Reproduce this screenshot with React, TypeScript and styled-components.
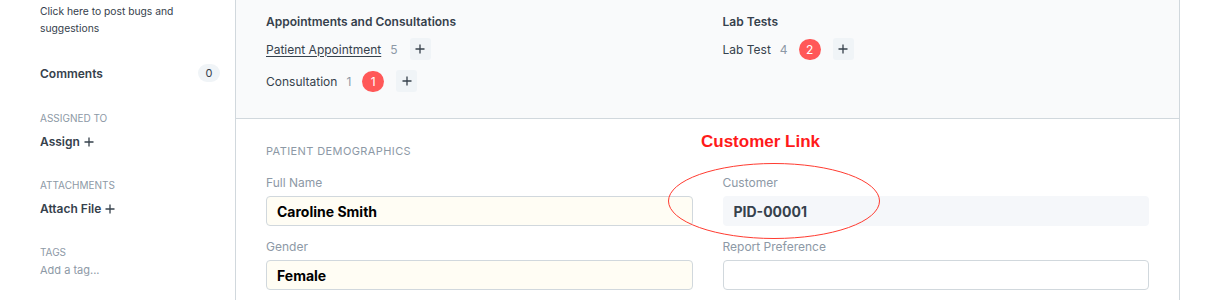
import styled, { createGlobalStyle } from "styled-components";

const GlobalStyle = createGlobalStyle`
  html, body {
    margin: 0;
    padding: 0;
    background: #fff;
    font-family: Inter, "Liberation Sans", sans-serif;
    color: #36414c;
  }
`;

const Page = styled.div`
  display: flex;
  width: 1221px;
  height: 300px;
  overflow: hidden;
`;

const Sidebar = styled.aside`
  width: 236px;
  flex: none;
  padding: 3px 15px 0 40px;
  box-sizing: border-box;
  border-right: 1px solid #d1d8dd;
`;

const HelpText = styled.p`
  margin: 0;
  font-size: 10.3px;
  line-height: 17px;
  color: #36414c;
`;

const CommentsRow = styled.div`
  display: flex;
  align-items: center;
  justify-content: space-between;
  margin-top: 27px;
  font-size: 12px;
  font-weight: 600;
`;

const CountPill = styled.span`
  display: inline-flex;
  align-items: center;
  justify-content: center;
  width: 22px;
  height: 18px;
  border-radius: 9px;
  background: #f0f4f7;
  font-size: 11px;
  font-weight: 400;
`;

const SideLabel = styled.div<{ $top: number }>`
  margin-top: ${(p) => p.$top}px;
  font-size: 10px;
  line-height: 14px;
  color: #8d99a6;
  text-transform: uppercase;
`;

const SideAction = styled.div`
  margin-top: 9px;
  font-size: 12px;
  font-weight: 600;
  line-height: 16px;
  display: flex;
  align-items: center;
  gap: 4px;
`;

const TagInput = styled.div`
  margin-top: 4px;
  font-size: 11px;
  color: #8d99a6;
`;

const Main = styled.main`
  width: 944px;
  flex: none;
  border-right: 1px solid #d1d8dd;
  box-sizing: border-box;
`;

const Dashboard = styled.section`
  background: #f9fafb;
  border-bottom: 1px solid #d1d8dd;
  height: 119px;
  box-sizing: border-box;
  padding: 14px 30px 0;
  display: grid;
  grid-template-columns: 1fr 1fr;
  column-gap: 30px;
`;

const GroupTitle = styled.div`
  font-size: 12px;
  font-weight: 600;
  line-height: 16px;
  margin-bottom: 8px;
`;

const LinkRow = styled.div`
  display: flex;
  align-items: center;
  height: 22px;
  margin-bottom: 10px;
  font-size: 12px;
`;

const DocLink = styled.span<{ $underline?: boolean }>`
  text-decoration: ${(p) => (p.$underline ? "underline" : "none")};
  text-underline-offset: 2px;
`;

const Count = styled.span`
  color: #8d99a6;
  margin-left: 9px;
`;

const RedBadge = styled.span`
  display: inline-flex;
  align-items: center;
  justify-content: center;
  min-width: 22px;
  height: 21px;
  padding: 0 1px;
  box-sizing: border-box;
  border-radius: 11px;
  background: #ff5858;
  color: #fff;
  font-size: 12px;
  margin-left: 11px;
`;

const AddButton = styled.span`
  display: inline-flex;
  align-items: center;
  justify-content: center;
  width: 21px;
  height: 22px;
  border-radius: 3px;
  background: #f0f4f7;
  margin-left: 12px;
`;

const FormSection = styled.section`
  position: relative;
  padding: 25px 30px 0;
`;

const SectionHead = styled.div`
  font-size: 11px;
  letter-spacing: 0.4px;
  color: #8d99a6;
  text-transform: uppercase;
  line-height: 14px;
  margin-bottom: 17px;
`;

const FieldGrid = styled.div`
  display: grid;
  grid-template-columns: 1fr 1fr;
  column-gap: 30px;
  row-gap: 13px;
`;

const Field = styled.div``;

const FieldLabel = styled.div`
  font-size: 12px;
  line-height: 16px;
  color: #8d99a6;
  margin-bottom: 5px;
`;

const Control = styled.div<{ $variant: "input" | "readonly" }>`
  height: 30px;
  box-sizing: border-box;
  border-radius: 4px;
  padding: 0 10px;
  display: flex;
  align-items: center;
  font-size: 14px;
  font-weight: 700;
  border: 1px solid ${(p) => (p.$variant === "readonly" ? "transparent" : "#d1d8dd")};
  background: ${(p) => (p.$variant === "readonly" ? "#f5f7fa" : "#fffdf4")};
  color: ${(p) => (p.$variant === "readonly" ? "#36414c" : "#000")};
`;

const EmptyControl = styled(Control)`
  background: #fff;
`;

const Annotation = styled.div`
  position: absolute;
  left: 465px;
  top: 13px;
  font-size: 17px;
  font-weight: 700;
  color: #ff1a1a;
  font-family: "Liberation Sans", sans-serif;
`;

const Ellipse = styled.svg`
  position: absolute;
  left: 432px;
  top: 44px;
  overflow: visible;
`;

const Plus = ({ size = 10 }: { size?: number }) => (
  <svg width={size} height={size} viewBox="0 0 10 10">
    <path d="M5 0.5v9M0.5 5h9" stroke="#36414c" strokeWidth="1.3" fill="none" />
  </svg>
);

export default function App() {
  return (
    <>
      <GlobalStyle />
      <Page>
        <Sidebar>
          <HelpText>
            Click here to post bugs and
            <br />
            suggestions
          </HelpText>
          <CommentsRow>
            <span>Comments</span>
            <CountPill>0</CountPill>
          </CommentsRow>
          <SideLabel $top={29}>Assigned To</SideLabel>
          <SideAction>
            Assign <Plus size={10} />
          </SideAction>
          <SideLabel $top={28}>Attachments</SideLabel>
          <SideAction>
            Attach File <Plus size={10} />
          </SideAction>
          <SideLabel $top={28}>Tags</SideLabel>
          <TagInput>Add a tag...</TagInput>
        </Sidebar>
        <Main>
          <Dashboard>
            <div>
              <GroupTitle>Appointments and Consultations</GroupTitle>
              <LinkRow>
                <DocLink $underline>Patient Appointment</DocLink>
                <Count>5</Count>
                <AddButton>
                  <Plus />
                </AddButton>
              </LinkRow>
              <LinkRow>
                <DocLink>Consultation</DocLink>
                <Count>1</Count>
                <RedBadge>1</RedBadge>
                <AddButton>
                  <Plus />
                </AddButton>
              </LinkRow>
            </div>
            <div>
              <GroupTitle>Lab Tests</GroupTitle>
              <LinkRow>
                <DocLink>Lab Test</DocLink>
                <Count>4</Count>
                <RedBadge>2</RedBadge>
                <AddButton>
                  <Plus />
                </AddButton>
              </LinkRow>
            </div>
          </Dashboard>
          <FormSection>
            <SectionHead>Patient Demographics</SectionHead>
            <FieldGrid>
              <Field>
                <FieldLabel>Full Name</FieldLabel>
                <Control $variant="input">Caroline Smith</Control>
              </Field>
              <Field>
                <FieldLabel>Customer</FieldLabel>
                <Control $variant="readonly">PID-00001</Control>
              </Field>
              <Field>
                <FieldLabel>Gender</FieldLabel>
                <Control $variant="input">Female</Control>
              </Field>
              <Field>
                <FieldLabel>Report Preference</FieldLabel>
                <EmptyControl $variant="input" />
              </Field>
            </FieldGrid>
            <Annotation>Customer Link</Annotation>
            <Ellipse width="212" height="76" viewBox="0 0 212 76">
              <ellipse cx="106" cy="38" rx="105.5" ry="37.5" fill="none" stroke="#ff3b30" strokeWidth="1" />
            </Ellipse>
          </FormSection>
        </Main>
      </Page>
    </>
  );
}
